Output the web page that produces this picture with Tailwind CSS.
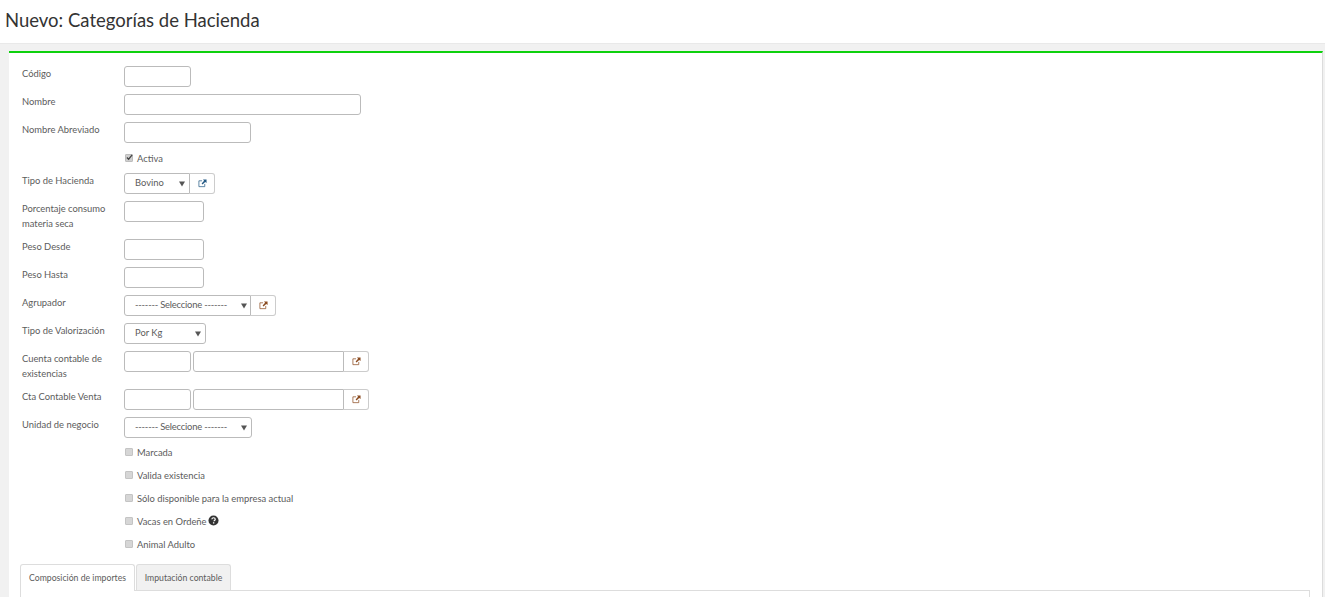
<!DOCTYPE html>
<html lang="es">
<head>
    <meta charset="UTF-8">
    <title>Nuevo: Categorías de Hacienda</title>
    <script src="https://cdn.jsdelivr.net/npm/@tailwindcss/browser@4"></script>
</head>
<body class="bg-white text-[#5c5c5c] font-['Lato',sans-serif] text-[9.4px] leading-[15px] h-[597px] overflow-hidden">
    <header class="h-[43px] pl-[5px] pt-[7px]">
        <h1 class="text-[18.5px] leading-[26px] text-[#333] font-normal">Nuevo: Categorías de Hacienda</h1>
    </header>
    <main class="bg-[#f1f1f1] border-t border-[#e9e9e9] pt-[7px] pl-[9px] pr-[2px] h-[554px]">
        <div class="bg-white border-t-2 border-[#0ed10e] h-full pl-[13px] pr-[12px] pt-[13px] border-r border-r-[#dcdcdc]">
            <!-- campos -->
            <div class="flex mb-[7px]">
                <label class="w-[102px]">Código</label>
                <input type="text" class="w-[67px] h-[21px] border border-[#bbb] rounded-[3px]">
            </div>
            <div class="flex mb-[7px]">
                <label class="w-[102px]">Nombre</label>
                <input type="text" class="w-[237px] h-[21px] border border-[#bbb] rounded-[3px]">
            </div>
            <div class="flex mb-[7px]">
                <label class="w-[102px]">Nombre Abreviado</label>
                <input type="text" class="w-[127px] h-[21px] border border-[#bbb] rounded-[3px]">
            </div>
            <div class="flex items-center h-[16px] mb-[7px] pl-[102px]">
                <span class="w-[8px] h-[8px] ml-[1px] mb-[1px] bg-[#cfcfcf] border border-[#bdbdbd] rounded-[1px] flex items-center justify-center">
                    <svg viewBox="0 0 8 8" class="w-[7px] h-[7px] shrink-0"><path d="M1 4l2 2 4-5" fill="none" stroke="#444" stroke-width="1.4"/></svg>
                </span>
                <span class="ml-[4px]">Activa</span>
            </div>
            <div class="flex mb-[7px]">
                <label class="w-[102px]">Tipo de Hacienda</label>
                <div class="flex h-[21px] w-[66px] items-center justify-between border border-[#bbb] rounded-l-[3px] pl-[10px] pr-[3px]">
                    <span class="mb-[2px]">Bovino</span>
                    <svg viewBox="0 0 6 5" class="w-[6px] h-[6px] mr-[1px]"><path d="M0 0h6L3 5z" fill="#555"/></svg>
                </div>
                <button class="w-[25px] h-[21px] border border-l-0 border-[#ccc] rounded-r-[3px] flex items-center justify-center">
                    <svg viewBox="0 0 10 10" class="w-[9px] h-[9px]"><path d="M7.5 5.5V8.500H1V2H4.500" fill="none" stroke="#245a85" stroke-width=".8"/><path d="M5.500 0.500H9.500V4.500L8 3.200 5 6 4 5 6.800 2z" fill="#245a85"/></svg>
                </button>
            </div>
            <div class="flex mb-[7px]">
                <label class="w-[102px] pb-[1px]">Porcentaje consumo materia seca</label>
                <input type="text" class="w-[80px] h-[21px] border border-[#bbb] rounded-[3px]">
            </div>
            <div class="flex mb-[7px]">
                <label class="w-[102px]">Peso Desde</label>
                <input type="text" class="w-[80px] h-[21px] border border-[#bbb] rounded-[3px]">
            </div>
            <div class="flex mb-[7px]">
                <label class="w-[102px]">Peso Hasta</label>
                <input type="text" class="w-[80px] h-[21px] border border-[#bbb] rounded-[3px]">
            </div>
            <div class="flex mb-[7px]">
                <label class="w-[102px]">Agrupador</label>
                <div class="flex h-[21px] w-[127px] items-center justify-between border border-[#bbb] rounded-l-[3px] pl-[10px] pr-[2px]">
                    <span class="whitespace-nowrap tracking-[-0.2px] mb-[2px]">------- Seleccione -------</span>
                    <svg viewBox="0 0 6 5" class="w-[6px] h-[6px] mr-[1px]"><path d="M0 0h6L3 5z" fill="#555"/></svg>
                </div>
                <button class="w-[25px] h-[21px] border border-l-0 border-[#ccc] rounded-r-[3px] flex items-center justify-center">
                    <svg viewBox="0 0 10 10" class="w-[9px] h-[9px]"><path d="M7.5 5.5V8.500H1V2H4.500" fill="none" stroke="#8a4a1f" stroke-width=".8"/><path d="M5.500 0.500H9.500V4.500L8 3.200 5 6 4 5 6.800 2z" fill="#8a4a1f"/></svg>
                </button>
            </div>
            <div class="flex mb-[7px]">
                <label class="w-[102px]">Tipo de Valorización</label>
                <div class="flex h-[21px] w-[82px] items-center justify-between border border-[#bbb] rounded-[3px] pl-[10px] pr-[3px]">
                    <span class="mb-[2px]">Por Kg</span>
                    <svg viewBox="0 0 6 5" class="w-[6px] h-[6px] mr-[1px]"><path d="M0 0h6L3 5z" fill="#555"/></svg>
                </div>
            </div>
            <div class="flex mb-[7px]">
                <label class="w-[102px] pb-[1px]">Cuenta contable de existencias</label>
                <input type="text" class="w-[67px] h-[21px] border border-[#bbb] rounded-[3px] mr-[2px]">
                <input type="text" class="w-[151px] h-[21px] border border-[#bbb] rounded-l-[3px]">
                <button class="w-[25px] h-[21px] border border-l-0 border-[#ccc] rounded-r-[3px] flex items-center justify-center">
                    <svg viewBox="0 0 10 10" class="w-[9px] h-[9px]"><path d="M7.5 5.5V8.500H1V2H4.500" fill="none" stroke="#8a4a1f" stroke-width=".8"/><path d="M5.500 0.500H9.500V4.500L8 3.200 5 6 4 5 6.800 2z" fill="#8a4a1f"/></svg>
                </button>
            </div>
            <div class="flex mb-[7px]">
                <label class="w-[102px]">Cta Contable Venta</label>
                <input type="text" class="w-[67px] h-[21px] border border-[#bbb] rounded-[3px] mr-[2px]">
                <input type="text" class="w-[151px] h-[21px] border border-[#bbb] rounded-l-[3px]">
                <button class="w-[25px] h-[21px] border border-l-0 border-[#ccc] rounded-r-[3px] flex items-center justify-center">
                    <svg viewBox="0 0 10 10" class="w-[9px] h-[9px]"><path d="M7.5 5.5V8.500H1V2H4.500" fill="none" stroke="#8a4a1f" stroke-width=".8"/><path d="M5.500 0.500H9.500V4.500L8 3.200 5 6 4 5 6.800 2z" fill="#8a4a1f"/></svg>
                </button>
            </div>
            <div class="flex mb-[6px]">
                <label class="w-[102px]">Unidad de negocio</label>
                <div class="flex h-[21px] w-[128px] items-center justify-between border border-[#bbb] rounded-[3px] pl-[10px] pr-[3px]">
                    <span class="whitespace-nowrap tracking-[-0.2px] mb-[2px]">------- Seleccione -------</span>
                    <svg viewBox="0 0 6 5" class="w-[6px] h-[6px] mr-[1px]"><path d="M0 0h6L3 5z" fill="#555"/></svg>
                </div>
            </div>
            <!-- checks -->
            <div class="flex flex-col gap-[7px] pl-[102px]">
                <div class="flex items-center h-[16px]"><span class="w-[8px] h-[8px] ml-[1px] mb-[1px] bg-[#d6d6d6] border border-[#c4c4c4] rounded-[1px]"></span><span class="ml-[4px]">Marcada</span></div>
                <div class="flex items-center h-[16px]"><span class="w-[8px] h-[8px] ml-[1px] mb-[1px] bg-[#d6d6d6] border border-[#c4c4c4] rounded-[1px]"></span><span class="ml-[4px]">Valida existencia</span></div>
                <div class="flex items-center h-[16px]"><span class="w-[8px] h-[8px] ml-[1px] mb-[1px] bg-[#d6d6d6] border border-[#c4c4c4] rounded-[1px]"></span><span class="ml-[4px]">Sólo disponible para la empresa actual</span></div>
                <div class="flex items-center h-[16px]"><span class="w-[8px] h-[8px] ml-[1px] mb-[1px] bg-[#d6d6d6] border border-[#c4c4c4] rounded-[1px]"></span><span class="ml-[4px]">Vacas en Ordeñe</span>
                    <svg viewBox="0 0 12 12" class="w-[11px] h-[11px] ml-[1px] mb-[1px]"><circle cx="6" cy="6" r="5.500" fill="#333"/><path d="M4.200 4.600C4.300 3.600 5 3 6 3c1.100 0 1.900.6 1.900 1.600 0 1.300-1.500 1.300-1.500 2.300" fill="none" stroke="#fff" stroke-width="1.300"/><rect x="5.400" y="7.900" width="1.500" height="1.400" fill="#fff"/></svg>
                </div>
                <div class="flex items-center h-[16px]"><span class="w-[8px] h-[8px] ml-[1px] mb-[1px] bg-[#d6d6d6] border border-[#c4c4c4] rounded-[1px]"></span><span class="ml-[4px]">Animal Adulto</span></div>
            </div>
            <!-- tabs -->
            <div class="flex mt-[12px] border-b border-[#ddd] -ml-[2px] items-end h-[27px] text-[8.7px]">
                <div class="h-[27px] w-[115px] -mb-[1px] border border-b-0 border-[#ddd] bg-white rounded-t-[3px] flex items-center justify-center pb-[1px]">Composición de importes</div>
                <div class="h-[26px] w-[95px] ml-[1px] border border-[#ddd] border-b-0 bg-[#f1f1f1] rounded-t-[3px] flex items-center justify-center pb-[1px]">Imputación contable</div>
            </div>
            <div class="border-x border-[#ddd] -ml-[2px] h-[10px]"></div>
        </div>
    </main>
</body>
</html>
